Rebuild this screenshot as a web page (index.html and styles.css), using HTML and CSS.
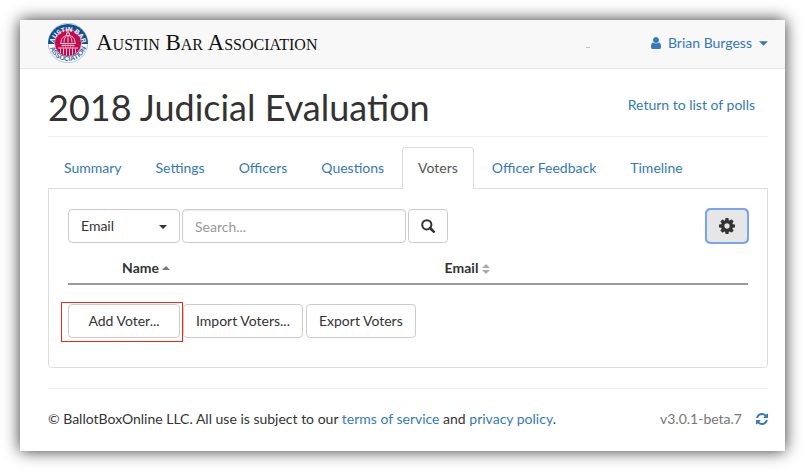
FILE: index.html
```html
<!DOCTYPE html>
<html lang="en">
<head>
    <meta charset="UTF-8">
    <meta name="viewport" content="width=device-width, initial-scale=1.0">
    <title>2018 Judicial Evaluation - Voters</title>
    <link rel="stylesheet" href="styles.css">
</head>
<body>
    <div class="page">
        <header class="navbar">
            <a class="brand" href="#">
                <svg class="seal" viewBox="0 0 80 80" aria-hidden="true">
                    <defs>
                        <path id="arc-top" d="M11 46a29 29 0 1 1 58 0"/>
                        <path id="arc-bottom" d="M2 38a38 38 0 0 0 76 0"/>
                    </defs>
                    <circle cx="40" cy="40" r="39.500" fill="#fff" stroke="#6f93bd" stroke-width="1"/>
                    <path d="M0 42a40 40 0 1 1 80 0z" fill="#11508f"/>
                    <circle cx="40" cy="40" r="27" fill="#c4094f" stroke="#fff" stroke-width="1"/>
                    <text class="seal-top"><textPath href="#arc-top" startOffset="50%" text-anchor="middle">AUSTIN BAR</textPath></text>
                    <text class="seal-bottom"><textPath href="#arc-bottom" startOffset="50%" text-anchor="middle">ASSOCIATION</textPath></text>
                    <g fill="none" stroke="#f3c3d3" stroke-width="2">
                        <path d="M40 14v6M37 20h6v5h-6zM26 40c0-10 6-15 14-15s14 5 14 15M32 39c0-7 3-12 5-13M48 39c0-7-3-12-5-13M40 26v13M24 41h32M27 45h26M20 50h40M25 51v9M31 51v12M37 51v14M43 51v14M49 51v12M55 51v9"/>
                        <path d="M30 41v9M35 41v9M40 41v9M45 41v9M50 41v9" stroke-width="1"/>
                    </g>
                </svg>
                <span class="brand-name">Austin Bar Association</span>
            </a>
            <div class="nav-right">
                <span class="nav-mark"></span>
                <button class="user-menu" type="button">
                    <svg class="icon-user" viewBox="0 0 1280 1536" aria-hidden="true"><path d="M1280 1271q0 109-62.500 187t-150.500 78h-854q-88 0-150.500-78t-62.500-187q0-85 8.500-160.500t31.500-152 58.500-131 94-89 134.500-34.500q131 128 313 128t313-128q76 0 134.500 34.500t94 89 58.500 131 31.500 152 8.500 160.500zm-256-887q0 159-112.500 271.500t-271.500 112.500-271.500-112.500-112.500-271.500 112.500-271.500 271.500-112.500 271.500 112.500 112.500 271.500z"/></svg>
                    <span>Brian Burgess</span>
                    <svg class="caret-lg" viewBox="0 0 10 5" aria-hidden="true"><path d="M0 0h10L5 5z"/></svg>
                </button>
            </div>
        </header>

        <main class="content">
            <div class="page-header">
                <h1>2018 Judicial Evaluation</h1>
                <a class="return-link" href="#">Return to list of polls</a>
            </div>

            <nav class="tabs">
                <a class="tab" href="#">Summary</a>
                <a class="tab" href="#">Settings</a>
                <a class="tab" href="#">Officers</a>
                <a class="tab" href="#">Questions</a>
                <a class="tab active" href="#">Voters</a>
                <a class="tab" href="#">Officer Feedback</a>
                <a class="tab" href="#">Timeline</a>
            </nav>

            <section class="panel">
                <form class="toolbar">
                    <div class="select-wrap">
                        <select class="btn" aria-label="Search by">
                            <option>Email</option>
                            <option>Name</option>
                        </select>
                        <svg class="caret" viewBox="0 0 8 4" aria-hidden="true"><path d="M0 0h8L4 4z"/></svg>
                    </div>
                    <input class="search" type="text" placeholder="Search..." aria-label="Search">
                    <button class="btn" type="button" aria-label="Search voters">
                        <svg class="icon-search" viewBox="0 0 14 14" aria-hidden="true"><circle cx="5.800" cy="5.800" r="4.600" fill="none" stroke="currentColor" stroke-width="2"/><path d="M9 9l3.700 3.700" fill="none" stroke="currentColor" stroke-width="2.600" stroke-linecap="round"/></svg>
                    </button>
                    <button class="btn btn-settings" type="button" aria-label="Options">
                        <svg class="icon-cog" viewBox="0 0 1536 1536" aria-hidden="true"><path d="M1024 768q0-106-75-181t-181-75-181 75-75 181 75 181 181 75 181-75 75-181zm512-109v222q0 12-8 23t-20 13l-185 28q-19 54-39 91 35 50 107 138 10 12 10 25t-9 23q-27 37-99 108t-94 71q-12 0-26-9l-138-108q-44 23-91 38-16 136-29 186-7 28-36 28h-222q-14 0-24.500-8.500t-11.500-21.500l-28-184q-49-16-90-37l-141 107q-10 9-25 9-14 0-25-11-126-114-165-168-7-10-7-23 0-12 8-23 15-21 51-66.500t54-70.500q-27-50-41-99l-183-27q-13-2-21-12.500t-8-23.500v-222q0-12 8-23t19-13l186-28q14-46 39-92-40-57-107-138-10-12-10-24 0-10 9-23 26-36 98.500-107.500t94.500-71.500q13 0 26 10l138 107q44-23 91-38 16-136 29-186 7-28 36-28h222q14 0 24.500 8.500t11.500 21.500l28 184q49 16 90 37l142-107q9-9 24-9 13 0 25 10 129 119 165 170 7 8 7 22 0 12-8 23-15 21-51 66.500t-54 70.500q26 50 41 98l183 28q13 2 21 12.500t8 23.500z"/></svg>
                    </button>
                </form>

                <table class="voters">
                    <thead>
                        <tr>
                            <th class="col-name">Name <svg class="sort" viewBox="0 0 8 10" aria-hidden="true"><path d="M0 6h8L4 2z" fill="#777"/></svg></th>
                            <th>Email <svg class="sort" viewBox="0 0 8 10" aria-hidden="true"><path d="M0 4h8L4 0zM0 6h8L4 10z" fill="#aaa"/></svg></th>
                            <th class="col-actions"></th>
                        </tr>
                    </thead>
                </table>

                <div class="actions">
                    <div class="highlight">
                        <button class="btn btn-add" type="button">Add Voter...</button>
                    </div>
                    <button class="btn" type="button">Import Voters...</button>
                    <button class="btn" type="button">Export Voters</button>
                </div>
            </section>

            <footer class="footer">
                <p>© BallotBoxOnline LLC. All use is subject to our <a href="#">terms of service</a> and <a href="#">privacy policy</a>.</p>
                <div class="version">
                    <span>v3.0.1-beta.7</span>
                    <a href="#" aria-label="Refresh">
                        <svg class="icon-refresh" viewBox="0 0 1536 1536" aria-hidden="true"><path d="M1511 928q0 5-1 7-64 268-268 434.500t-478 166.500q-146 0-282.500-55t-243.500-157l-129 129q-19 19-45 19t-45-19-19-45v-448q0-26 19-45t45-19h448q26 0 45 19t19 45-19 45l-137 137q71 66 161 102t187 36q134 0 250-65t186-179q11-17 53-117 8-23 30-23h192q13 0 22.500 9.500t9.500 22.500zm25-800v448q0 26-19 45t-45 19h-448q-26 0-45-19t-19-45 19-45l138-138q-148-137-349-137-134 0-250 65t-186 179q-11 17-53 117-8 23-30 23h-199q-13 0-22.500-9.500t-9.500-22.500v-7q65-268 270-434.500t480-166.500q146 0 284 55.500t245 156.500l130-129q19-19 45-19t45 19 19 45z"/></svg>
                    </a>
                </div>
            </footer>
        </main>
    </div>
</body>
</html>
```

FILE: styles.css
```css
* {
    margin: 0;
    padding: 0;
    box-sizing: border-box;
}

body {
    font-family: Lato, 'Liberation Sans', sans-serif;
    font-size: 14px;
    line-height: 20px;
    color: #333;
    background: #fff;
    padding: 20px;
}

a {
    color: #337ab7;
    text-decoration: none;
}

svg {
    display: block;
    fill: currentColor;
}

button,
input,
select {
    font: inherit;
    color: inherit;
}

.page {
    background: #fff;
    box-shadow: 0 0 15px rgba(0, 0, 0, 0.8);
}

/* top bar */
.navbar {
    display: flex;
    justify-content: space-between;
    align-items: center;
    padding: 3px 17px 5px 28px;
    background: #f8f8f8;
    border-bottom: 1px solid #e7e7e7;
}

.brand {
    display: flex;
    align-items: center;
    gap: 8px;
    color: #111;
}

.seal {
    width: 40px;
    height: 40px;
}

.seal text {
    font-family: 'Liberation Sans', sans-serif;
    font-weight: bold;
}

.seal-top {
    font-size: 13px;
    fill: #fff;
}

.seal-bottom {
    font-size: 14px;
    fill: #3f6fa6;
}

.brand-name {
    font-family: 'Liberation Serif', serif;
    font-size: 23px;
    font-variant: small-caps;
}

.nav-right {
    display: flex;
    align-items: center;
    gap: 61px;
}

.nav-mark {
    width: 4px;
    height: 1px;
    margin-top: 8px;
    background: #b5c3d3;
}

.user-menu {
    display: flex;
    align-items: center;
    gap: 7px;
    border: none;
    background: none;
    color: #337ab7;
    cursor: pointer;
}

.icon-user {
    width: 10px;
    height: 12px;
}

.caret-lg {
    width: 9px;
    height: 5px;
}

/* title */
.content {
    padding: 18px 17px 22px 28px;
}

.page-header {
    display: flex;
    justify-content: space-between;
    align-items: flex-start;
    padding-bottom: 8px;
    margin-bottom: 10px;
    border-bottom: 1px solid #eee;
}

.page-header h1 {
    font-size: 36px;
    font-weight: 400;
    line-height: 41px;
}

.return-link {
    padding: 8px 13px 0;
}

/* tabs */
.tabs {
    display: flex;
    gap: 2px;
}

.tab {
    padding: 10px 15px;
    border: 1px solid transparent;
    border-bottom: none;
    border-radius: 4px 4px 0 0;
}

.tab.active {
    position: relative;
    margin-bottom: -1px;
    color: #555;
    background: #fff;
    border-color: #ddd;
}

.panel {
    padding: 20px 19px 29px;
    border: 1px solid #ddd;
    border-radius: 0 0 4px 4px;
}

/* controls */
.btn {
    height: 34px;
    padding: 0 12px;
    border: 1px solid #ccc;
    border-radius: 4px;
    background: #fff;
    cursor: pointer;
}

.toolbar {
    display: flex;
    align-items: center;
    gap: 2px;
}

.select-wrap {
    position: relative;
}

.select-wrap select {
    width: 112px;
    appearance: none;
}

.caret {
    position: absolute;
    top: 16px;
    right: 13px;
    width: 8px;
    height: 4px;
    pointer-events: none;
}

.search {
    width: 224px;
    height: 34px;
    padding: 0 12px;
    border: 1px solid #ccc;
    border-radius: 4px;
    box-shadow: inset 0 1px 1px rgba(0, 0, 0, 0.08);
}

.search::placeholder {
    color: #999;
}

.icon-search {
    width: 14px;
    height: 14px;
}

.btn-settings {
    margin-left: auto;
    background: #e6e6e6;
    border-color: #8c8c8c;
    outline: 2px solid #78a5f0;
    outline-offset: -1px;
}

.icon-cog {
    width: 16px;
    height: 16px;
}

/* voters list */
.voters {
    width: 100%;
    margin-top: 10px;
    border-collapse: collapse;
    table-layout: fixed;
}

.voters th {
    padding: 5px 0;
    border-bottom: 2px solid #999;
    font-weight: 700;
}

.voters .col-name {
    width: 23%;
}

.voters .col-actions {
    width: 38px;
}

.sort {
    display: inline-block;
    width: 8px;
    height: 10px;
    vertical-align: -1px;
}

.actions {
    display: flex;
    gap: 3px;
    margin-top: 19px;
}

.highlight {
    position: relative;
}

/* red frame drawn round the add button */
.highlight::after {
    content: '';
    position: absolute;
    inset: -2px -3px -4px -7px;
    border: 1px solid #f0261a;
    pointer-events: none;
}

.btn-add {
    width: 112px;
}

.footer {
    display: flex;
    justify-content: space-between;
    margin-top: 20px;
    padding-top: 20px;
    border-top: 1px solid #eee;
}

.version {
    display: flex;
    align-items: center;
    gap: 14px;
    color: #777;
}

.icon-refresh {
    width: 12px;
    height: 12px;
}
```
